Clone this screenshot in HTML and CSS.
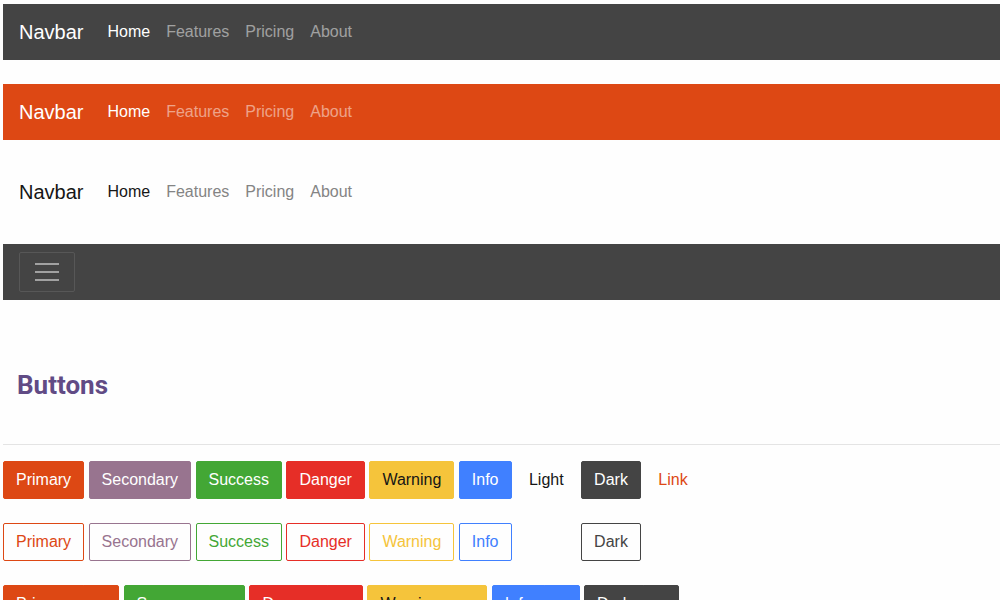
FILE: index.html
```html
<!DOCTYPE html>
<html lang="en">
<head>
<meta charset="utf-8">
<title>Navbars and buttons</title>
<link rel="stylesheet" href="styles.css">
</head>
<body>
<nav class="navbar navbar-dark">
  <a class="brand" href="#">Navbar</a>
  <a class="nav-link active" href="#">Home</a>
  <a class="nav-link" href="#">Features</a>
  <a class="nav-link" href="#">Pricing</a>
  <a class="nav-link" href="#">About</a>
</nav>
<nav class="navbar navbar-primary">
  <a class="brand" href="#">Navbar</a>
  <a class="nav-link active" href="#">Home</a>
  <a class="nav-link" href="#">Features</a>
  <a class="nav-link" href="#">Pricing</a>
  <a class="nav-link" href="#">About</a>
</nav>
<nav class="navbar navbar-light">
  <a class="brand" href="#">Navbar</a>
  <a class="nav-link active" href="#">Home</a>
  <a class="nav-link" href="#">Features</a>
  <a class="nav-link" href="#">Pricing</a>
  <a class="nav-link" href="#">About</a>
</nav>
<nav class="navbar navbar-dark">
  <button class="toggler" type="button" aria-label="Toggle navigation">
    <svg width="30" height="30" viewBox="0 0 30 30" aria-hidden="true"><path d="M3 7h24M3 15h24M3 23h24" stroke="currentColor" stroke-width="2"/></svg>
  </button>
</nav>
<main>
  <h2 class="title">Buttons</h2>
  <div class="row">
    <button class="btn primary" type="button">Primary</button>
    <button class="btn secondary" type="button">Secondary</button>
    <button class="btn success" type="button">Success</button>
    <button class="btn danger" type="button">Danger</button>
    <button class="btn warning" type="button">Warning</button>
    <button class="btn info" type="button">Info</button>
    <button class="btn light" type="button">Light</button>
    <button class="btn dark" type="button">Dark</button>
    <a class="btn link" href="#">Link</a>
  </div>
  <div class="row">
    <button class="btn outline primary" type="button">Primary</button>
    <button class="btn outline secondary" type="button">Secondary</button>
    <button class="btn outline success" type="button">Success</button>
    <button class="btn outline danger" type="button">Danger</button>
    <button class="btn outline warning" type="button">Warning</button>
    <button class="btn outline info" type="button">Info</button>
    <button class="btn outline light" type="button">Light</button>
    <button class="btn outline dark" type="button">Dark</button>
  </div>
  <div class="row">
    <div class="group"><button class="btn primary" type="button">Primary</button><button class="btn caret primary" type="button" aria-label="Primary menu"></button></div>
    <div class="group"><button class="btn success" type="button">Success</button><button class="btn caret success" type="button" aria-label="Success menu"></button></div>
    <div class="group"><button class="btn danger" type="button">Danger</button><button class="btn caret danger" type="button" aria-label="Danger menu"></button></div>
    <div class="group"><button class="btn warning" type="button">Warning</button><button class="btn caret warning" type="button" aria-label="Warning menu"></button></div>
    <div class="group"><button class="btn info" type="button">Info</button><button class="btn caret info" type="button" aria-label="Info menu"></button></div>
    <div class="group"><button class="btn dark" type="button">Dark</button><button class="btn caret dark" type="button" aria-label="Dark menu"></button></div>
  </div>
</main>
</body>
</html>
```

FILE: styles.css
```css
*, *::before, *::after { box-sizing: border-box; }

body {
  height: 100vh;
  margin: 0;
  padding: 4px 0 0 3px;
  overflow: hidden;
  background: #fefefe;
  color: #161616;
  font-family: "Liberation Sans", Arial, sans-serif;
  font-size: 16px;
  line-height: 24px;
}

.navbar {
  display: flex;
  align-items: center;
  min-height: 56px;
  margin-bottom: 24px;
  padding: 8px 16px;
}
.navbar-dark { background: #444; color: #fff; }
.navbar-primary { background: #dd4814; color: #fff; }
.navbar-light { color: #161616; }

.brand {
  margin-right: 16px;
  color: inherit;
  font-size: 20px;
  line-height: 30px;
  text-decoration: none;
}
.nav-link {
  padding: 8px;
  color: rgba(255, 255, 255, 0.5);
  text-decoration: none;
}
.navbar-light .nav-link { color: #848484; }
.navbar .nav-link.active { color: inherit; }

.toggler {
  display: flex;
  padding: 4px 12px;
  border: 1px solid #575757;
  border-radius: 2px;
  background: transparent;
  color: #a1a1a1;
}

.title {
  margin: 0 0 16px;
  padding: 44px 14px 42px;
  border-bottom: 1px solid #e4e4e4;
  color: #614b85;
  font-family: Roboto, "Liberation Sans", sans-serif;
  font-size: 26px;
  line-height: 34px;
}

.row { margin-bottom: 24px; white-space: nowrap; }
.group { display: inline-flex; vertical-align: middle; }

.btn {
  display: inline-block;
  padding: 6px 12px;
  border: 1px solid var(--tone);
  border-radius: 2px;
  background: var(--tone);
  color: #fff;
  font: inherit;
  text-decoration: none;
  vertical-align: middle;
}
.primary { --tone: #dd4814; }
.secondary { --tone: #98748f; }
.success { --tone: #43a735; }
.danger { --tone: #e62e27; }
.warning { --tone: #f5c43b; color: #161616; }
.info { --tone: #4080ff; }
.light { --tone: #fefefe; color: #161616; }
.dark { --tone: #444; }
.link { --tone: transparent; color: #dd4814; }
.outline { background: transparent; color: var(--tone); }

.group .btn:first-child { border-radius: 2px 0 0 2px; }
.group .caret { margin-left: -1px; border-radius: 0 2px 2px 0; }
.caret::after {
  content: "";
  display: block;
  border: 5px solid transparent;
  border-top-color: currentColor;
  border-bottom: 0;
}
```
